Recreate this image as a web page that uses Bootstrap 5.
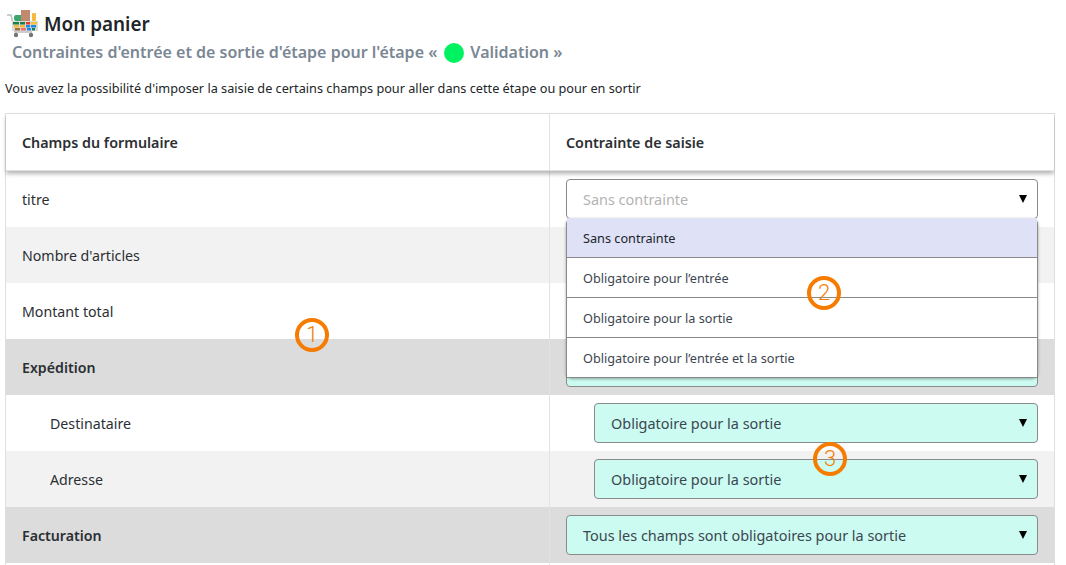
<!DOCTYPE html>
<html lang="fr">
<head>
<meta charset="utf-8">
<title>Mon panier</title>
<link href="https://cdn.jsdelivr.net/npm/bootstrap@5.3.0/dist/css/bootstrap.min.css" rel="stylesheet">
<style>
html,body{height:565px;overflow:hidden;background:#fff}
body{font-family:"Noto Sans","Open Sans",sans-serif;color:#212529;font-size:14px;position:relative}
.page-wrap{padding:9px 5px 0 5px;width:1055px;height:565px;overflow:hidden}
.title-line{height:30px;padding-left:1px;gap:6px}
.title-line h1{font-size:18.9px;font-weight:600;margin:0;line-height:24px}
.sub-line{font-size:16px;font-weight:600;color:#7a8794;margin:0 0 0 7px;line-height:27px;height:27px;gap:6px}
.dot-green{width:20px;height:20px;border-radius:50%;background:#00f260;display:inline-block;margin-left:1px}
.intro{font-size:12.7px;line-height:18px;margin:13px 0 16px 0}
.form-table{width:1050px;table-layout:fixed;border:1px solid #dfdfdf;border-bottom:0;border-collapse:separate;border-spacing:0;margin:0}
.form-table th,.form-table td{height:56px;padding:1px 16px 0;vertical-align:middle;font-size:14.2px;border:0;border-right:1px solid #e3e3e3;color:#2b2f33}
.form-table th:first-child,.form-table td:first-child{width:544px}
.form-table th:last-child,.form-table td:last-child{border-right:0}
.form-table thead th{font-weight:600;font-size:14.3px;height:57px;border-bottom:1px solid #e0e0e0;background:#fff}
.head-shadow{box-shadow:0 3px 4px rgba(0,0,0,.28);position:relative;z-index:2}
.row-alt td{background:#f2f2f2}
.row-group td{background:#dcdcdc}
.row-group td:first-child{font-weight:600}
.form-table td.ctl-cell{padding:0 16px}
.form-table .tail-row td{height:2px;padding:0;line-height:0}
.indent-cell{padding-left:44px!important}
.fake-select{height:40px;border:1px solid #8a8a8a;border-radius:4px;background:#fff;padding:1px 10px 0 16px;font-size:14.45px;color:#3c4650}
.fake-select.is-set{background:#cbfbf1}
.fake-select.is-empty{color:#b3b3b3}
.select-inset{margin-left:28px}
.caret-down{width:0;height:0;border-left:4px solid transparent;border-right:4px solid transparent;border-top:8px solid #000;margin-bottom:1px}
.drop-cell{position:relative}
.drop-list{position:absolute;left:16px;top:47px;width:472px;z-index:3;background:#fff;border-left:1px solid #8a8a8a;border-right:1px solid #8a8a8a;box-shadow:0 1px 3px rgba(0,0,0,.35)}
.drop-list .list-group-item{height:40px;padding:2px 16px 0;border:0;border-bottom:1px solid #8a8a8a;border-radius:0;font-size:12.7px;color:#3c4650;background:#fff;display:flex;align-items:center}
.drop-list .list-group-item.is-current{background:#dfe1f6;color:#20252b}
.mark-circle{position:absolute;width:34px;height:34px;border:4px solid #f57c00;border-radius:50%;color:#f57c00;font-size:22px;font-weight:300;line-height:25px;text-align:center;z-index:5;font-family:Roboto,"Liberation Sans",sans-serif}
.m1{left:295px;top:318px}
.m2{left:807px;top:276px}
.m3{left:813px;top:442px}
</style>
</head>
<body>
<div class="page-wrap">
  <div class="d-flex align-items-center title-line">
    <svg width="32" height="28" viewBox="0 0 32 28" aria-hidden="true">
      <path d="M1 5h4l4 17h17" fill="none" stroke="#bdbdbd" stroke-width="1.5"/>
      <rect x="8" y="5" width="9" height="6" rx="2" fill="#3aa76d"/>
      <rect x="15" y="0" width="9" height="11" fill="#c08a6e"/>
      <rect x="26" y="3" width="4" height="8" rx="1" fill="#f6b93b"/>
      <rect x="6" y="11" width="26" height="10" fill="#d9d9d9"/>
      <rect x="7" y="12" width="6" height="2.5" fill="#1b7f4b"/><rect x="14" y="12" width="5" height="2.5" fill="#1b7f4b"/><rect x="20" y="12" width="4" height="2.5" fill="#e53935"/><rect x="25" y="12" width="6" height="2.5" fill="#f6c431"/>
      <rect x="8" y="15" width="5" height="2.5" fill="#f6b93b"/><rect x="14" y="15" width="5" height="2.5" fill="#f6b93b"/><rect x="20" y="15" width="4" height="2.5" fill="#1e88e5"/><rect x="25" y="15" width="5" height="2.5" fill="#1e88e5"/>
      <rect x="9" y="18" width="5" height="2.5" fill="#a0703f"/><rect x="15" y="18" width="5" height="2.5" fill="#e57373"/><rect x="21" y="18" width="4" height="2.5" fill="#1e88e5"/><rect x="26" y="18" width="3" height="2.5" fill="#1b7f4b"/>
      <circle cx="10" cy="25" r="2.2" fill="#757575"/><circle cx="25" cy="25" r="2.2" fill="#757575"/>
    </svg>
    <h1>Mon panier</h1>
  </div>
  <h2 class="sub-line d-flex align-items-center">Contraintes d'entrée et de sortie d'étape pour l'étape « <span class="dot-green"></span> Validation »</h2>
  <p class="intro">Vous avez la possibilité d'imposer la saisie de certains champs pour aller dans cette étape ou pour en sortir</p>
  <table class="table form-table">
    <thead class="head-shadow">
      <tr><th>Champs du formulaire</th><th>Contrainte de saisie</th></tr>
    </thead>
    <tbody>
      <tr><td>titre</td><td class="drop-cell ctl-cell">
        <div class="fake-select is-empty d-flex align-items-center justify-content-between"><span>Sans contrainte</span><span class="caret-down"></span></div>
        <div class="list-group drop-list">
          <div class="list-group-item is-current">Sans contrainte</div>
          <div class="list-group-item">Obligatoire pour l’entrée</div>
          <div class="list-group-item">Obligatoire pour la sortie</div>
          <div class="list-group-item">Obligatoire pour l’entrée et la sortie</div>
        </div>
      </td></tr>
      <tr class="row-alt"><td>Nombre d'articles</td><td class="ctl-cell"></td></tr>
      <tr><td>Montant total</td><td class="ctl-cell"></td></tr>
      <tr class="row-group"><td>Expédition</td><td class="ctl-cell"><div class="fake-select is-set"></div></td></tr>
      <tr><td class="indent-cell">Destinataire</td><td class="ctl-cell"><div class="fake-select is-set select-inset d-flex align-items-center justify-content-between"><span>Obligatoire pour la sortie</span><span class="caret-down"></span></div></td></tr>
      <tr class="row-alt"><td class="indent-cell">Adresse</td><td class="ctl-cell"><div class="fake-select is-set select-inset d-flex align-items-center justify-content-between"><span>Obligatoire pour la sortie</span><span class="caret-down"></span></div></td></tr>
      <tr class="row-group"><td>Facturation</td><td class="ctl-cell"><div class="fake-select is-set d-flex align-items-center justify-content-between"><span>Tous les champs sont obligatoires pour la sortie</span><span class="caret-down"></span></div></td></tr>
      <tr class="tail-row"><td></td><td></td></tr>
    </tbody>
  </table>
</div>
<div class="mark-circle m1">1</div>
<div class="mark-circle m2">2</div>
<div class="mark-circle m3">3</div>
</body>
</html>
